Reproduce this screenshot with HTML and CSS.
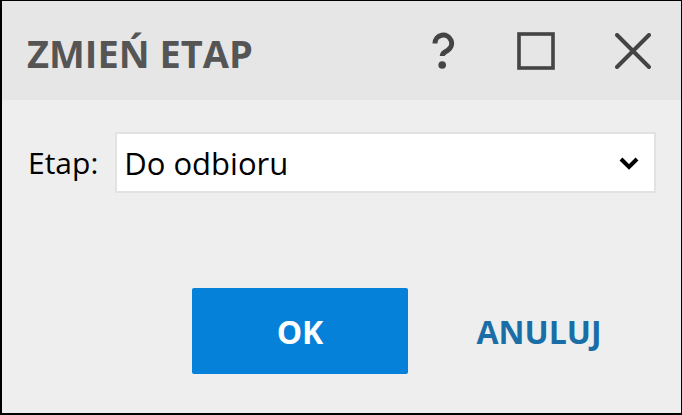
FILE: index.html
```html
<!DOCTYPE html>
<html lang="pl">
<head>
    <meta charset="UTF-8">
    <meta name="viewport" content="width=device-width, initial-scale=1.0">
    <link rel="stylesheet" href="styles.css">
    <title>Zmień etap</title>
</head>
<body>
    <div class="dialog">
        <div class="dialog-head">
            <h1 class="dialog-title">ZMIEŃ ETAP</h1>
            <div class="head-icons">
                <svg class="ico-help" width="26" height="38" viewBox="0 0 26 38">
                    <path d="M4 11.5 A8.3 8.3 0 1 1 16.5 18.5 C12.8 20.5 11.2 21.5 11.2 24" fill="none" stroke="#444" stroke-width="5"/>
                    <circle cx="11.2" cy="33" r="3.8" fill="#444"/>
                </svg>
                <svg class="ico-max" width="38" height="38" viewBox="0 0 38 38">
                    <rect x="2" y="2" width="34" height="34" fill="none" stroke="#444" stroke-width="3.6"/>
                </svg>
                <svg class="ico-close" width="36" height="36" viewBox="0 0 36 36">
                    <path d="M2 2 L34 34 M34 2 L2 34" stroke="#444" stroke-width="4" stroke-linecap="round"/>
                </svg>
            </div>
        </div>
        <div class="dialog-body">
            <div class="field">
                <label class="field-label">Etap:</label>
                <div class="select-box">
                    <span class="select-value">Do odbioru</span>
                    <svg width="22" height="14" viewBox="0 0 22 14">
                        <path d="M3 3 L11 11 L19 3" fill="none" stroke="#000" stroke-width="4"/>
                    </svg>
                </div>
            </div>
            <div class="buttons">
                <button class="btn btn-ok" type="button">OK</button>
                <button class="btn btn-cancel" type="button">ANULUJ</button>
            </div>
        </div>
    </div>
</body>
</html>
```

FILE: styles.css
```css
*{box-sizing:border-box;}
body{margin:0;font-family:"Open Sans","Liberation Sans",sans-serif;}
.dialog{width:682px;height:415px;border:1px solid #000;border-left-width:2px;border-bottom-width:2px;background:#eeeeee;display:flex;flex-direction:column;}
.dialog-head{height:99px;background:#e6e6e6;display:flex;align-items:center;justify-content:space-between;padding:0 30px 0 25px;}
.dialog-title{margin:0;padding-top:4px;font-size:38px;font-weight:700;color:#555;letter-spacing:0;}
.head-icons{display:flex;align-items:center;gap:60px;}
.dialog-body{flex:1;display:flex;flex-direction:column;padding:32px 25px 39px 26px;}
.field{display:flex;align-items:center;gap:17px;}
.field-label{font-size:30px;color:#000;}
.select-box{width:542px;height:61px;background:#fff;border:2px solid #e2e2e2;display:flex;align-items:center;justify-content:space-between;padding:0 14px 0 7px;}
.select-value{font-size:31px;color:#000;}
.buttons{margin-top:auto;display:flex;justify-content:flex-end;gap:23px;padding-right:9px;}
.btn{width:216px;height:86px;border:none;border-radius:2px;font-family:inherit;font-size:32px;font-weight:700;cursor:pointer;}
.btn-ok{background:#0681d9;color:#fff;}
.btn-cancel{background:transparent;color:#1a6ea8;}
```
